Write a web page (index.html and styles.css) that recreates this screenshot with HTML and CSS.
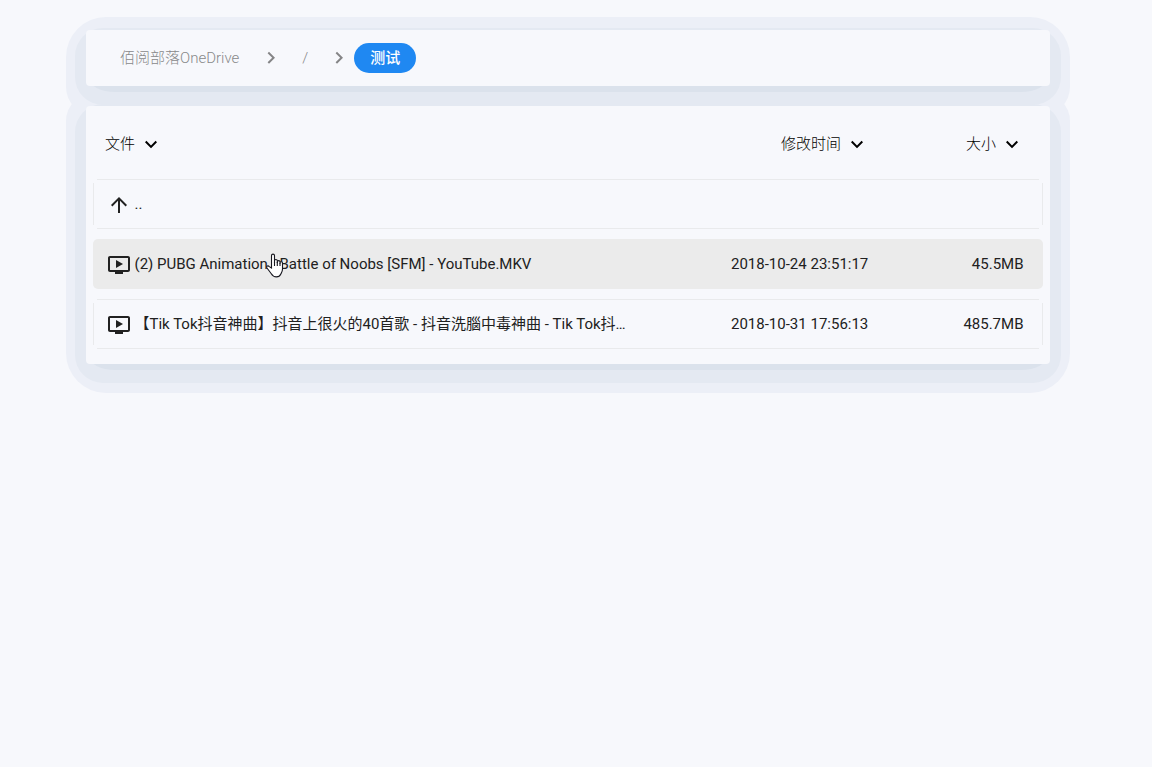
FILE: index.html
```html
<!DOCTYPE html>
<html lang="zh-CN">
<head>
<meta charset="utf-8">
<title>佰阅部落OneDrive</title>
<link rel="stylesheet" href="styles.css">
</head>
<body>
<svg class="defs" width="0" height="0">
  <symbol id="down" viewBox="0 0 24 24"><path d="M7.41 7.84L12 12.42l4.59-4.58L18 9.25l-6 6-6-6z"/></symbol>
  <symbol id="right" viewBox="0 0 24 24"><path d="M8.59 16.34l4.58-4.59-4.58-4.59L10 5.75l6 6-6 6z"/></symbol>
  <symbol id="up" viewBox="0 0 24 24"><path d="M4 12l1.41 1.41L11 7.83V20h2V7.83l5.58 5.59L20 12l-8-8-8 8z"/></symbol>
  <symbol id="video" viewBox="0 0 24 24"><path d="M21 3H3c-1.11 0-2 .89-2 2v12c0 1.1.89 2 2 2h5v2h8v-2h5c1.1 0 1.99-.9 1.99-2L23 5c0-1.11-.9-2-2-2zm0 14H3V5h18v12zm-5-6l-7 4V7z"/></symbol>
</svg>
<main class="page">
  <div class="shell upper">
    <nav class="card crumbs">
      <a class="crumb">佰阅部落OneDrive</a>
      <svg class="icon sep"><use href="#right"/></svg>
      <a class="crumb root">/</a>
      <svg class="icon sep last"><use href="#right"/></svg>
      <a class="chip">测试</a>
    </nav>
  </div>
  <div class="shell lower">
    <section class="card files">
      <header class="head">
        <div class="name">文件<svg class="icon sort"><use href="#down"/></svg></div>
        <div class="date">修改时间<svg class="icon sort"><use href="#down"/></svg></div>
        <div class="size">大小<svg class="icon sort"><use href="#down"/></svg></div>
      </header>
      <ul class="list">
        <li class="row"><svg class="icon"><use href="#up"/></svg><span class="title">..</span></li>
        <li class="row active"><svg class="icon"><use href="#video"/></svg><span class="title">(2) PUBG Animation - Battle of Noobs [SFM] - YouTube.MKV</span><span class="time">2018-10-24 23:51:17</span><span class="bytes">45.5MB</span>
          <svg class="pointer" viewBox="0 0 18 25"><path d="M5.5 15V2.7C5.5.6 8.5.6 8.5 2.7V10 7.8c0-1.7 2.8-1.7 2.8 0V10 8.8c0-1.6 2.7-1.6 2.7 0v2-1c0-1.5 2.5-1.5 2.5.2v6c0 3-1.2 4-1.8 5.2-.8 2-2.1 2.7-4.2 2.7-2.8 0-4-1-5.2-3.2L1 15c-1-1.8 1-2.8 2.3-1.4z"/><path d="M8.5 9v4m2.8-4v4m2.7-3v3"/></svg>
        </li>
        <li class="row"><svg class="icon"><use href="#video"/></svg><span class="title">【Tik Tok抖音神曲】抖音上很火的40首歌 - 抖音洗腦中毒神曲 - Tik Tok抖音</span><span class="time">2018-10-31 17:56:13</span><span class="bytes">485.7MB</span></li>
      </ul>
    </section>
  </div>
</main>
</body>
</html>
```
FILE: styles.css
```css
* { box-sizing: border-box; }
body {
  margin: 0;
  min-height: 767px;
  background: #f7f8fc;
  color: #212121;
  font: 400 15px/20px Roboto, "Noto Sans CJK SC", sans-serif;
}
.defs { display: block; }
.page {
  position: relative;
  z-index: 0;
  display: flex;
  flex-direction: column;
  gap: 20px;
  width: 964px;
  margin-left: 86px;
  padding-top: 30px;
}
.shell { position: relative; }
/* stepped halo: light outer ring, mid ring, dark lower edge */
.shell::before, .shell::after, .card::before {
  content: "";
  position: absolute;
}
.shell::before { inset: -13px -20px -29px; background: #eceff7; z-index: -3; }
.upper::before { border-radius: 40px 40px 28px 28px; }
.lower::before { border-radius: 28px 28px 40px 40px; }
.shell::after { inset: -2px -11px -19px; border-radius: 28px; background: #e4e9f2; z-index: -2; }
.card::before { inset: 8px 3px -6px; border-radius: 26px / 14px; background: #dbe2ec; z-index: -1; }
.card { border-radius: 4px; background: #f7f8fc; }
.icon { width: 24px; height: 24px; flex: none; fill: currentColor; }
.crumbs { display: flex; align-items: center; height: 56px; padding-left: 34px; }
.crumb { color: #88888a; font-weight: 300; }
.sep { color: #858587; margin-left: 20px; }
.root { margin-left: 19px; }
.last { margin-left: 19px; margin-right: 3px; }
.chip {
  height: 30px;
  padding: 0 16px;
  border-radius: 15px;
  background: #1f88f2;
  color: #fff;
  font-weight: 500;
  line-height: 30px;
}
.files { height: 258px; padding: 0 7px; }
.head { display: flex; height: 73px; padding: 2px 19px 0 12px; align-items: center; }
.head > div { display: flex; align-items: center; font-weight: 300; color: #000; }
.name { width: 676px; }
.date { flex: 1; }
.sort { margin: 3px 0 0 4px; }
.list { display: flex; flex-direction: column; gap: 10px; margin: 0; padding: 0; list-style: none; }
.row {
  position: relative;
  display: flex;
  align-items: center;
  height: 50px;
  padding: 0 19.5px 0 13.5px;
  background:
    linear-gradient(#e9eaec, #e9eaec) center top / calc(100% - 8px) 1px,
    linear-gradient(#e9eaec, #e9eaec) center bottom / calc(100% - 8px) 1px,
    linear-gradient(#e9eaec, #e9eaec) left center / 1px calc(100% - 8px),
    linear-gradient(#e9eaec, #e9eaec) right center / 1px calc(100% - 8px);
  background-repeat: no-repeat;
}
.row .icon { margin-top: 2px; }
.active { background: #ebebeb; border-radius: 5px; }
.title { width: 496px; margin-left: 4px; overflow: hidden; text-overflow: ellipsis; white-space: nowrap; }
.time { margin-left: 100.5px; }
.bytes { margin-left: auto; }
.pointer { position: absolute; left: 173px; top: 14px; width: 18px; height: 25px; fill: #fff; stroke: #17171f; stroke-width: 1.1; }
```
